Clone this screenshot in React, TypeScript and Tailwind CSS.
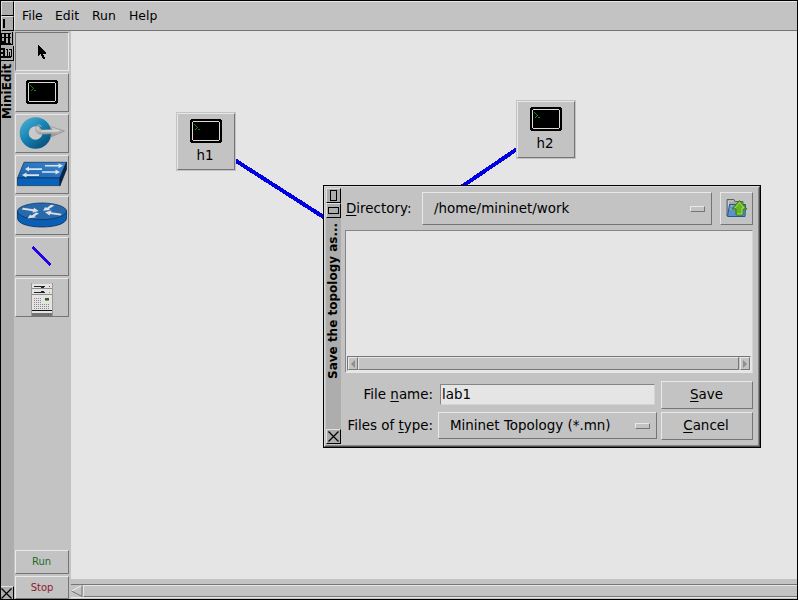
import React from "react";

const raised = "border border-t-[#e8e8e8] border-l-[#e8e8e8] border-b-[#757575] border-r-[#757575] bg-[#c3c3c3]";
const sunken = "border border-t-[#757575] border-l-[#757575] border-b-[#e8e8e8] border-r-[#e8e8e8] bg-[#c3c3c3]";
const wmButton = "border border-t-[#e0e0e0] border-l-[#e0e0e0] border-b-black border-r-black bg-[#adadad]";

function Terminal() {
  return (
    <svg width="32" height="24" viewBox="0 0 32 24" className="block shrink-0" shapeRendering="crispEdges">
      <path d="M1 0h30v1h1v22h-1v1H1v-1H0V1h1z" fill="#000" />
      <path d="M3 2.5h26M3 21.5h26M2.5 3v18M29.5 3v18" stroke="#ded8cf" fill="none" />
      <path d="M4 5h1v1h1v1h1v1h1v1h-1v1h-1v1h-1v-1h1v-1h1v-1h-1v-1h-1v-1h-1zM8 10h2v1H8z" fill="#0b8a0b" />
    </svg>
  );
}

function Pointer() {
  return (
    <svg width="10" height="16" viewBox="0 0 10 16" className="block" shapeRendering="crispEdges">
      <path d="M1 1h1v1h1v1h1v1h1v1h1v1h1v1h1v1h1v2H6v1h1v2h1v2H6v-1H5v-2H4v-2H3v1H2v1H1z" fill="#000" />
    </svg>
  );
}

function LegacySwitch() {
  return (
    <svg width="46" height="34" viewBox="0 0 46 34" className="block">
      <defs>
        <linearGradient id="ring" x1="0" y1="0" x2="0.8" y2="1">
          <stop offset="0" stopColor="#43a6cd" />
          <stop offset=".5" stopColor="#1683b2" />
          <stop offset="1" stopColor="#095a86" />
        </linearGradient>
        <linearGradient id="steel" x1="0" y1="0" x2="0" y2="1">
          <stop offset="0" stopColor="#d8d8d8" />
          <stop offset="1" stopColor="#8c8c8c" />
        </linearGradient>
      </defs>
      <circle cx="16.5" cy="17" r="11.3" fill="#c9c9c9" stroke="url(#ring)" strokeWidth="9" />
      <path d="M17.500 10.500c-2 5 1 8.500 7 7.500l8.500-.3-1.500 3.500L45.500 15 31.500 10.500l1.500 3-9 .5c-3 0-4-1.500-3.500-3.500z" fill="url(#steel)" stroke="#8f8f8f" strokeWidth=".7" />
      <path d="M22 15h12l6-.3" fill="none" stroke="#e6e6e6" strokeWidth="1" />
      <path d="M17.500 11.500c0-3 4-3.500 5-.5" fill="none" stroke="#aeb9be" strokeWidth="1" />
    </svg>
  );
}

function SwitchIcon() {
  return (
    <svg width="50" height="26" viewBox="0 0 50 26" className="block">
      <defs>
        <linearGradient id="swTop" x1="0" y1="1" x2="1" y2="0">
          <stop offset="0" stopColor="#1863b0" />
          <stop offset="1" stopColor="#3c86ce" />
        </linearGradient>
      </defs>
      <path d="M7 1.300h42.500L43 17H.5z" fill="url(#swTop)" stroke="#08305c" strokeWidth=".7" />
      <path d="M.5 17H43v7.600H.5z" fill="#0862b8" stroke="#08305c" strokeWidth=".7" />
      <path d="M43 17 49.500 1.300v7L43 24.600z" fill="#062448" stroke="#041a33" strokeWidth=".7" />
      <g fill="#dfe3e6">
        <path d="M28 4h13.500V2.300L46 4.800l-4.500 2.500V5.600H28z" />
        <path d="M25 7.300H12V5.600L8 8l4 2.500V8.900h13z" />
        <path d="M25 10.200h13.500V8.500L43 11l-4.500 2.500v-1.700H25z" />
        <path d="M22 13.300H9.500v-1.700L5 14l4.500 2.500v-1.600H22z" />
      </g>
    </svg>
  );
}

function RouterIcon() {
  return (
    <svg width="50" height="26" viewBox="0 0 50 26" className="block">
      <path d="M.5 9v7c0 12 49 12 49 0V9z" fill="#0a5fb4" stroke="#06305f" strokeWidth=".8" />
      <ellipse cx="25" cy="9.300" rx="24.500" ry="8.300" fill="#2769ab" stroke="#093565" strokeWidth=".8" />
      <g fill="#dcdfe1">
        <path d="M6 5.800 16.500 7.300 17 5.800 21.700 9 15.500 10.800 16 9.200 4.800 7.500z" />
        <path d="M34 2.800 30 5.800 28 5.200 26 8.700 33.500 8 31.800 7 37.500 3.500z" />
        <path d="M22 11.300 17.500 14.300 19.300 15.200 10.500 16.500 13 12.700 14.800 13.400 19 10.500z" />
        <path d="M44.500 11.700 34 10.200 34.500 8.600 28 10.300 32.500 13.500 33.200 11.900 43.500 13.500z" />
      </g>
    </svg>
  );
}

function ServerIcon() {
  const dots: React.ReactNode[] = [];
  for (let r = 0; r < 6; r++) {
    for (let c = 0; c < (r < 3 ? 4 : 8); c++) {
      dots.push(<rect key={r + "-" + c} x={3 + c * 2} y={15 + r * 2} width="1" height="1" fill="#888" />);
    }
  }
  return (
    <svg width="22" height="34" viewBox="0 0 22 34" className="block" shapeRendering="crispEdges">
      <path d="M1 1h20v32H1z" fill="#e4e4e4" />
      <path d="M0 0h1v33H0zM21 0h1v33h-1z" fill="#999" />
      <path d="M1 5h20v1H1zM1 11h20v1H1z" fill="#8e8e8e" />
      <path d="M3 3h11v1H3zM3 9h11v1H3z" fill="#222" />
      <path d="M10 4h3v1h-3zM10 8h3v1h-3z" fill="#222" />
      <path d="M18 3h1v1h-1z" fill="#c22" />
      <path d="M18 9h1v1h-1z" fill="#5b3" />
      {dots}
      <path d="M14 15h4v3h-4z" fill="#44503e" />
      <path d="M14 17h4v1h-4z" fill="#6ab12c" />
      <path d="M1 27h20v1H1z" fill="#111" />
      <path d="M1 30h20v3H1z" fill="#737373" />
      <path d="M17 31h1v1h-1z" fill="#c22" />
      <path d="M18 31h1v1h-1z" fill="#5b3" />
    </svg>
  );
}

function FolderUp() {
  return (
    <svg width="22" height="20" viewBox="0 0 22 20" className="block">
      <path d="M1 18V1.500h7l1 2h8V10" fill="#a9a9a9" stroke="#5f625f" />
      <path d="M2.500 17V3h5" stroke="#cfcfcf" fill="none" />
      <path d="M3.500 6.500h16L19 18.500H1.500z" fill="#5f91c9" stroke="#24549a" />
      <path d="M4.500 8H18M4 11h14" stroke="#99bce0" strokeWidth="1" />
      <path d="m13.500 2.500 7.500 8.500H17v6h-7v-6H6z" fill="#64b51f" stroke="#347c09" />
      <path d="m9 10 4.500-5.500 4.500 5.500h-2v6h-5" fill="none" stroke="#a4dc58" />
    </svg>
  );
}

function Host({ name, className }: { name: string; className: string }) {
  return (
    <div className={"absolute h-[59px] w-[60px] border border-[#c3c3c3] " + className}>
      <div className={"flex h-[57px] w-[58px] flex-col items-center pt-[5px] " + raised}>
        <Terminal />
        <span className="mt-[5px] pr-[2px] text-[13.4px] leading-4">{name}</span>
      </div>
    </div>
  );
}

function Tool({ children, pressed }: { children: React.ReactNode; pressed?: boolean }) {
  return (
    <button className={"flex h-[39px] w-[54px] shrink-0 items-center justify-center overflow-hidden " + (pressed ? sunken : "pb-px " + raised)}>
      {children}
    </button>
  );
}

function Cross() {
  return (
    <svg width="11" height="11" viewBox="0 0 11 11" className="block shrink-0">
      <path d="M.5 .5l10 10M10.500 .5l-10 10" stroke="#000" strokeWidth="1.300" />
    </svg>
  );
}

function MainTitleBar() {
  return (
    <div className="flex w-[13px] shrink-0 flex-col bg-[#adadad]">
      <div className={"h-[15px] w-[13px] shrink-0 " + wmButton} />
      <div className={"flex h-[15px] w-[13px] shrink-0 items-center pl-[1px] " + wmButton}>
        <div className="h-[9px] w-[2px] bg-black" />
      </div>
      <svg width="13" height="30" viewBox="0 0 13 30" className="block shrink-0" shapeRendering="crispEdges">
        <path d="M11.500 1v12.500H0M0 2.500h10M0 12.500h10" fill="none" stroke="#000" />
        <path d="M3 3h2v9H3zM0 6h10v1H0zM7 3h2v9H7zM0 3h1v9H0zM1 10h3v2H1z" fill="#000" />
        <path d="M12.500 15v14.500H0" fill="none" stroke="#000" />
        <path d="M0 17h3v2H0zM2 17h2v10H2zM0 21h4v2H0zM0 25h10v2H0zM6 19h1v7H6zM8 18h3v1H8zM10 18h1v8h-1zM8 21h1v4H8zM5 18h2v1H5z" fill="#000" />
      </svg>
      <div className="flex h-[58px] w-[13px] shrink-0 rotate-180 items-start text-[12px] leading-[13px] font-bold whitespace-nowrap [writing-mode:vertical-rl]">
        MiniEdit
      </div>
      <div className="grow" />
      <div className="flex h-[13px] w-[13px] shrink-0 items-center border-t border-r border-t-[#e0e0e0] border-r-black">
        <Cross />
      </div>
    </div>
  );
}

function Indicator() {
  return <div className={"h-[6px] w-[15px] shrink-0 " + raised} />;
}

function SaveDialog() {
  return (
    <div className="absolute top-[154px] left-[252px] flex h-[263px] w-[438px] border border-black bg-[#c3c3c3] text-[13.45px]">
      <div className="flex grow border border-t-[#d8d8d8] border-r-[#4c4c4c] border-b-[#4c4c4c] border-l-[#d8d8d8]">
        <div className="flex grow border border-t-[#c3c3c3] border-r-[#858585] border-b-[#858585] border-l-[#c3c3c3]">
          <div className="mb-px flex w-[15px] shrink-0 flex-col bg-[#adadad]">
            <div className={"flex h-[15px] w-[15px] shrink-0 items-center justify-center " + wmButton}>
              <div className="h-[11px] w-[7px] border border-black" />
            </div>
            <div className={"flex h-[15px] w-[15px] shrink-0 items-center justify-center " + wmButton}>
              <div className="h-[7px] w-[11px] border border-black" />
            </div>
            <div className="flex h-[161px] w-[15px] shrink-0 rotate-180 text-[12px] leading-[15px] font-bold whitespace-nowrap [writing-mode:vertical-rl]">
              Save the topology as...
            </div>
            <div className="grow" />
            <div className={"flex h-[15px] w-[15px] shrink-0 items-center justify-center " + wmButton}>
              <Cross />
            </div>
          </div>
          <div className="flex grow flex-col pt-[4px] pr-[5px] pl-[4px]">
            <div className="flex h-[33px] items-center">
              <span className="w-[77px] shrink-0 pl-px">
                <u className="underline-offset-2">D</u>irectory:
              </span>
              <button className={"flex h-[33px] w-[290px] items-center justify-between pr-[6px] pl-[11px] " + raised}>
                /home/mininet/work
                <Indicator />
              </button>
              <button className={"ml-[8px] flex h-[33px] w-[33px] items-center justify-center pb-px " + raised}>
                <FolderUp />
              </button>
            </div>
            <div className="mt-[5px] flex h-[143px] w-[408px] flex-col justify-end border border-t-[#858585] border-r-[#d4d4d4] border-b-[#e8e8e8] border-l-[#858585] bg-[#e5e5e5] px-px pb-px">
              <div className={"flex h-[15px] w-[404px] " + sunken}>
                <div className={"flex h-[13px] w-[10px] shrink-0 items-center justify-center " + raised}>
                  <svg width="6" height="8" viewBox="0 0 6 8"><path d="M5 0v8L1 4z" fill="#8e8e8e" /></svg>
                </div>
                <div className={"h-[13px] grow " + raised} />
                <div className={"ml-px flex h-[13px] w-[10px] shrink-0 items-center justify-center " + raised}>
                  <svg width="6" height="8" viewBox="0 0 6 8"><path d="M1 0v8l4-4z" fill="#8e8e8e" /></svg>
                </div>
              </div>
            </div>
            <div className="mt-[8px] flex h-[28px] items-center">
              <span className="w-[88px] shrink-0 pb-px text-right">
                File <u className="underline-offset-2">n</u>ame:
              </span>
              <div className="mb-px ml-[7px] flex h-[21px] w-[215px] items-center border border-t-[#858585] border-r-[#d4d4d4] border-b-[#d4d4d4] border-l-[#858585] bg-[#e5e5e5] pl-px">lab1</div>
              <button className={"ml-[6px] h-[28px] w-[92px] pr-px " + raised}>
                <u className="underline-offset-2">S</u>ave
              </button>
            </div>
            <div className="mt-[3px] flex h-[28px] items-center">
              <span className="w-[88px] shrink-0 pb-px text-right whitespace-nowrap">
                Files of <u className="underline-offset-2">t</u>ype:
              </span>
              <button className={"mb-px ml-[5px] flex h-[27px] w-[219px] items-center justify-between pr-[6px] pl-[11px] " + raised}>
                Mininet Topology (*.mn)
                <Indicator />
              </button>
              <button className={"ml-[4px] h-[28px] w-[92px] pr-[2px] " + raised}>
                <u className="underline-offset-2">C</u>ancel
              </button>
            </div>
          </div>
        </div>
      </div>
    </div>
  );
}

export default function App() {
  return (
    <div className="flex h-[600px] w-[798px] overflow-hidden border border-black bg-[#c3c3c3] font-['DejaVu_Sans',sans-serif] text-[13px] leading-4 text-black">
      <MainTitleBar />
      <div className="flex w-[783px] shrink-0 flex-col">
        <div className="flex h-[30px] shrink-0 items-center border-t border-b border-l border-t-[#e8e8e8] border-b-[#757575] border-l-[#e8e8e8] pl-[7px] text-[12.4px]">
          <span className="w-[33px]">File</span>
          <span className="w-[37px]">Edit</span>
          <span className="w-[37px]">Run</span>
          <span className="w-[37px]">Help</span>
        </div>
        <div className="flex grow">
          <div className="flex w-[57px] shrink-0 flex-col gap-[2px] pt-px pl-px">
            <Tool pressed><Pointer /></Tool>
            <Tool><Terminal /></Tool>
            <Tool><LegacySwitch /></Tool>
            <Tool><SwitchIcon /></Tool>
            <Tool><RouterIcon /></Tool>
            <Tool>
              <svg width="22" height="22" viewBox="0 0 22 22" shapeRendering="crispEdges">
                <path d="M1.500 2l18 18" stroke="#2a00e8" strokeWidth="3.500" />
              </svg>
            </Tool>
            <Tool><div className="translate-y-[3px]"><ServerIcon /></div></Tool>
            <div className="grow" />
            <button className={"h-[24px] w-[54px] shrink-0 pr-px text-[10px] text-[#1c6b2c] " + raised}>Run</button>
            <button className={"h-[23px] w-[54px] shrink-0 text-[10px] text-[#8f1c2b] " + raised}>Stop</button>
          </div>
          <div className="flex grow flex-col">
            <div className="relative h-[548px] shrink-0 bg-[#e5e5e5]">
              <svg width="726" height="548" viewBox="71 31 726 548" className="block" shapeRendering="crispEdges">
                <path d="M205 141L375 250M545 130L375 245.500" stroke="#0000e0" strokeWidth="4" />
              </svg>
              <Host name="h1" className="top-[81px] left-[105px]" />
              <Host name="h2" className="top-[69px] left-[445px]" />
              <SaveDialog />
            </div>
            <div className={"mt-[5px] flex h-[14px] w-[727px] border-r-0 border-l-0 " + sunken}>
              <svg width="12" height="12" viewBox="0 0 12 12" className="block shrink-0">
                <path d="M11 .5v11L.5 6z" fill="#c3c3c3" />
                <path d="M11 .5.5 6" stroke="#eee" />
                <path d="M.5 6 11 11.500V.5" stroke="#757575" fill="none" />
              </svg>
              <div className="h-[12px] grow border border-r-0 border-t-[#e8e8e8] border-b-[#757575] border-l-[#e8e8e8]" />
            </div>
          </div>
        </div>
      </div>
    </div>
  );
}
